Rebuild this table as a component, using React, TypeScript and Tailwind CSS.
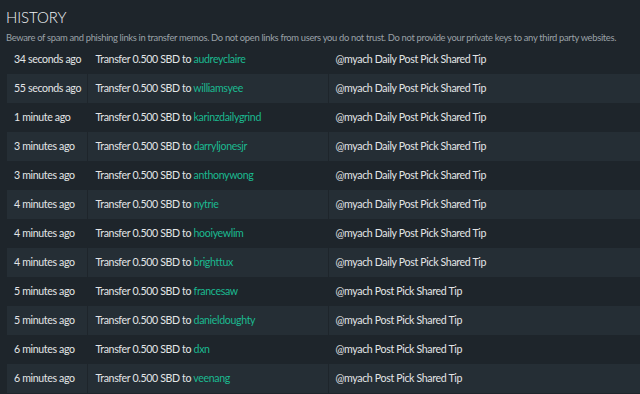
const rows = [
  { time: '34 seconds ago', to: 'audreyclaire', memo: '@myach Daily Post Pick Shared Tip' },
  { time: '55 seconds ago', to: 'williamsyee', memo: '@myach Daily Post Pick Shared Tip' },
  { time: '1 minute ago', to: 'karinzdailygrind', memo: '@myach Daily Post Pick Shared Tip' },
  { time: '3 minutes ago', to: 'darryljonesjr', memo: '@myach Daily Post Pick Shared Tip' },
  { time: '3 minutes ago', to: 'anthonywong', memo: '@myach Daily Post Pick Shared Tip' },
  { time: '4 minutes ago', to: 'nytrie', memo: '@myach Daily Post Pick Shared Tip' },
  { time: '4 minutes ago', to: 'hooiyewlim', memo: '@myach Daily Post Pick Shared Tip' },
  { time: '4 minutes ago', to: 'brighttux', memo: '@myach Daily Post Pick Shared Tip' },
  { time: '5 minutes ago', to: 'francesaw', memo: '@myach Post Pick Shared Tip' },
  { time: '5 minutes ago', to: 'danieldoughty', memo: '@myach Post Pick Shared Tip' },
  { time: '6 minutes ago', to: 'dxn', memo: '@myach Post Pick Shared Tip' },
  { time: '6 minutes ago', to: 'veenang', memo: '@myach Post Pick Shared Tip' },
];

export default function App() {
  return (
    <div className="w-[640px] h-[394px] overflow-hidden bg-[#1e252b] font-['Lato','Noto_Sans',sans-serif] text-[#e3e5e7]">
      {/* Header */}
      <div className="px-[6px] pt-[7px]">
        <h2 className="text-[15px] leading-[20px] font-light tracking-[-0.1px] text-[#f0f2f3]">HISTORY</h2>
        <p className="mt-[4px] text-[9.4px] leading-[13px] tracking-[-0.32px] text-[#9aa1a7] whitespace-nowrap">
          Beware of spam and phishing links in transfer memos. Do not open links from users you do not trust. Do not provide your private keys to any third party websites.
        </p>
      </div>

      {/* Transfers */}
      <table className="ml-[7px] mt-[1px] w-[633px] table-fixed border-collapse text-[10.6px] tracking-[-0.35px]">
        <colgroup>
          <col className="w-[80px]" />
          <col className="w-[241px]" />
          <col />
        </colgroup>
        <tbody>
          {rows.map((r, i) => (
            <tr key={i} className={i % 2 === 1 ? 'bg-[#252e35]' : 'bg-[#1e252b]'}>
              <td className="h-[29px] pl-[7px] border-r border-[#1e252b] whitespace-nowrap">{r.time}</td>
              <td className="h-[29px] pl-[8px] border-r border-[#1e252b] whitespace-nowrap">
                Transfer 0.500 SBD to <span className="text-[#1bb990]">{r.to}</span>
              </td>
              <td className="h-[29px] pl-[7px] whitespace-nowrap">{r.memo}</td>
            </tr>
          ))}
        </tbody>
      </table>
    </div>
  );
}
